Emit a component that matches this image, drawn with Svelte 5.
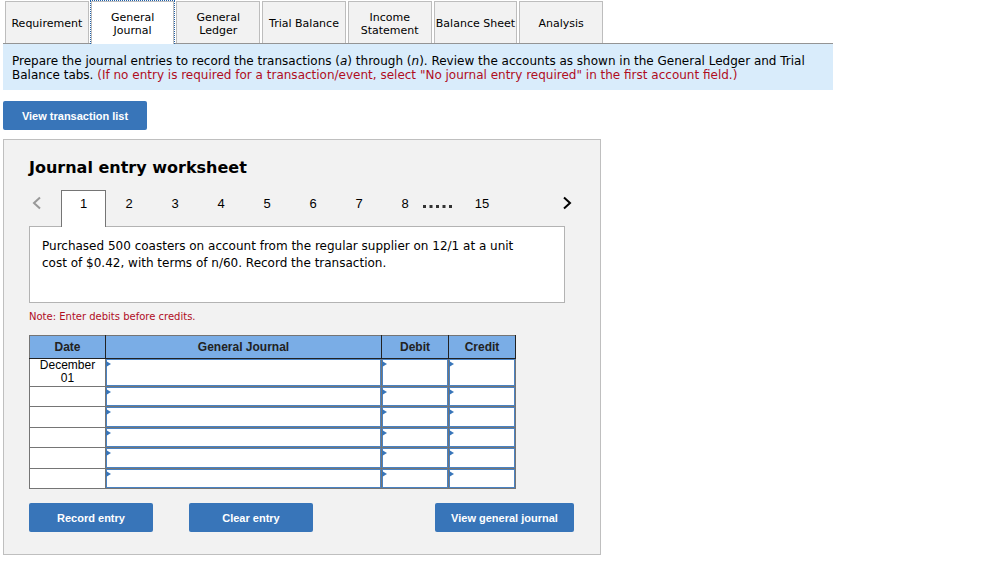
<script lang="ts">
  const tabs = [
    'Requirement',
    'General Journal',
    'General Ledger',
    'Trial Balance',
    'Income Statement',
    'Balance Sheet',
    'Analysis'
  ];
  const steps = [1, 2, 3, 4, 5, 6, 7, 8];
  const columns = ['General Journal', 'Debit', 'Credit'];
  const dates = ['December 01', '', '', '', '', ''];

  let activeTab = $state('General Journal');
  let step = $state(1);
</script>

<main>
  <nav class="tabs" aria-label="Sections">
    {#each tabs as tab (tab)}
      <button class="tab" class:active={tab === activeTab} onclick={() => (activeTab = tab)}>
        {tab}
      </button>
    {/each}
  </nav>

  <p class="instructions">
    Prepare the journal entries to record the transactions (<i>a</i>) through (<i>n</i>). Review the
    accounts as shown in the General Ledger and Trial Balance tabs.
    <span class="hint"
      >(If no entry is required for a transaction/event, select "No journal entry required" in the
      first account field.)</span
    >
  </p>

  <button class="action list">View transaction list</button>

  <section class="worksheet">
    <h1>Journal entry worksheet</h1>

    <div class="pager">
      <button class="arrow" aria-label="Previous" disabled={step === 1} onclick={() => (step -= 1)}>
        <svg width="10" height="14" viewBox="0 0 10 14"><path d="M8 1.5 2 7l6 5.5" /></svg>
      </button>
      {#each steps as n (n)}
        <button class="step" class:current={n === step} onclick={() => (step = n)}>{n}</button>
      {/each}
      <svg class="dots" width="32" height="3" viewBox="0 0 32 3">
        {#each [0, 1, 2, 3, 4] as i (i)}
          <rect x={1 + i * 6.5} y="0" width="3" height="3" />
        {/each}
      </svg>
      <button class="step" class:current={step === 15} onclick={() => (step = 15)}>15</button>
      <button class="arrow next" aria-label="Next" onclick={() => (step += 1)}>
        <svg width="10" height="14" viewBox="0 0 10 14"><path d="M2 1.5 8 7l-6 5.5" /></svg>
      </button>
    </div>

    <div class="description">
      Purchased 500 coasters on account from the regular supplier on 12/1 at a unit cost of $0.42,
      with terms of n/60. Record the transaction.
    </div>

    <p class="note">Note: Enter debits before credits.</p>

    <table>
      <thead>
        <tr>
          <th class="date">Date</th>
          <th>General Journal</th>
          <th class="amount">Debit</th>
          <th class="amount">Credit</th>
        </tr>
      </thead>
      <tbody>
        {#each dates as date, row}
          <tr>
            <td>{date}</td>
            {#each columns as column (column)}
              <td class="entry"><input type="text" aria-label="{column}, line {row + 1}" /></td>
            {/each}
          </tr>
        {/each}
      </tbody>
    </table>

    <div class="actions">
      <button class="action">Record entry</button>
      <button class="action">Clear entry</button>
      <button class="action view">View general journal</button>
    </div>
  </section>
</main>

<style>
  :global(body) {
    margin: 0;
    background: #fff;
  }
  main {
    max-width: 830px;
    margin: 0 3px;
    padding: 1px 0 10px;
    font: 12px/14px 'DejaVu Sans', Verdana, sans-serif;
    color: #000;
  }
  button {
    margin: 0;
    padding: 0;
    border: 0;
    background: none;
    color: inherit;
    font: inherit;
    cursor: pointer;
  }
  .tabs {
    display: grid;
    grid-template-columns: repeat(7, 1fr);
    gap: 2px;
    max-width: 598px;
    padding-left: 2px;
  }
  .tab {
    height: 42px;
    padding: 2px 0 0;
    border: 1px solid #bdbdbd;
    border-bottom: 0;
    background: #f2f2f2;
    font-size: 11px;
    line-height: 13px;
  }
  .tab.active {
    position: relative;
    height: 43px;
    margin-bottom: -1px;
    padding: 1px 16px 0;
    background: #fff;
  }
  .tab.active::after {
    content: '';
    position: absolute;
    inset: -2px -2px 0;
    border: 1px dotted #1f5fa8;
    border-bottom: 0;
  }
  .instructions {
    margin: 0;
    padding: 10px 20px 8px 9px;
    border-top: 1px solid #949494;
    background: #d9ecfb;
  }
  .hint {
    color: #b00d1e;
  }
  .action {
    min-width: 124px;
    height: 29px;
    padding-top: 1px;
    border-radius: 2px;
    background: #3875b9;
    color: #fff;
    font: bold 11px/13px 'Liberation Sans', Arial, sans-serif;
  }
  .list {
    width: 144px;
    margin-top: 11px;
    display: block;
  }
  .worksheet {
    box-sizing: border-box;
    max-width: 598px;
    margin-top: 9px;
    padding: 18px 25px 22px;
    border: 1px solid #bfbfbf;
    background: #f2f2f2;
  }
  h1 {
    margin: 0 0 12px;
    font-size: 16px;
    line-height: 20px;
  }
  .pager {
    display: flex;
    align-items: flex-start;
    max-width: 545px;
  }
  .arrow {
    width: 15px;
    height: 26px;
    margin-right: 17px;
  }
  .arrow svg {
    display: block;
    margin: 0 auto;
    fill: none;
    stroke: #000;
    stroke-width: 2;
  }
  .arrow:disabled svg {
    stroke: #999;
  }
  .arrow.next {
    margin: 0 0 0 auto;
  }
  .step {
    width: 46px;
    height: 37px;
    padding-bottom: 12px;
    border: 1px solid transparent;
    border-bottom: 0;
    font: 13px/15px 'Liberation Sans', Arial, sans-serif;
  }
  .step.current {
    position: relative;
    width: 45px;
    border-color: #757575;
    background: #fff;
  }
  .dots {
    margin: 15px 5px 0 -6px;
    fill: #333;
  }
  .description {
    box-sizing: border-box;
    max-width: 536px;
    min-height: 77px;
    margin-top: -1px;
    padding: 11px 50px 11px 12px;
    border: 1px solid #b3b3b3;
    background: #fff;
    line-height: 17px;
  }
  .note {
    margin: 7px 0 11px;
    color: #b00d1e;
    font-size: 10px;
  }
  table {
    width: 100%;
    max-width: 487px;
    height: 154px;
    border-collapse: collapse;
    table-layout: fixed;
    background: #fff;
    font: 12px/13px 'Liberation Sans', Arial, sans-serif;
    text-align: center;
  }
  th {
    height: 22px;
    padding: 0;
    border: 1px solid #222;
    border-top-color: #757575;
    background: #7aade6;
    color: #222;
  }
  th:first-child {
    border-left-color: #757575;
  }
  .date {
    width: 75px;
  }
  .amount {
    width: 66px;
  }
  td {
    padding: 0 6px;
    border: 1px solid #757575;
  }
  .entry {
    position: relative;
    padding: 0;
    box-shadow: inset 0 0 0 1px #4a82c2;
  }
  .entry::before {
    content: '';
    position: absolute;
    top: 2px;
    left: 0;
    border: 3px solid transparent;
    border-left: 5px solid #3875b9;
    border-right: 0;
  }
  .entry input {
    display: block;
    box-sizing: border-box;
    width: 100%;
    height: 19px;
    padding: 0 6px;
    border: 0;
    background: none;
    font: inherit;
  }
  .actions {
    display: flex;
    max-width: 545px;
    gap: 36px;
    margin-top: 14px;
  }
  .view {
    width: 139px;
    margin-left: auto;
  }
</style>
